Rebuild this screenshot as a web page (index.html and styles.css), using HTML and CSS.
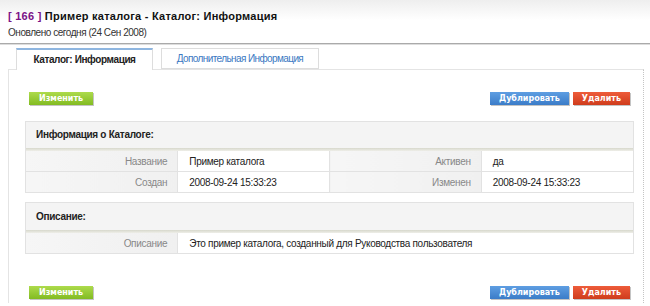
FILE: index.html
```html
<!DOCTYPE html>
<html lang="ru">
<head>
    <meta charset="UTF-8">
    <title>Каталог: Информация</title>
    <link rel="stylesheet" href="styles.css">
</head>
<body>

    <div class="page-header">
        <h1><span class="record-id">[ 166 ]</span> Пример каталога - Каталог: Информация</h1>
        <div class="updated">Оновлено сегодня (24 Сен 2008)</div>
    </div>

    <!-- Tabs -->
    <div class="tabs">
        <a class="tab active">Каталог: Информация</a>
        <a class="tab">Дополнительная Информация</a>
    </div>

    <div class="panel">
        <div class="actions">
            <button class="btn btn-green">Изменить</button>
            <div class="actions-right">
                <button class="btn btn-blue">Дублировать</button>
                <button class="btn btn-red">Удалить</button>
            </div>
        </div>

        <!-- Catalog info -->
        <div class="section">
            <div class="section-title">Информация о Каталоге:</div>
            <table class="fields">
                <tr>
                    <td class="label">Название</td>
                    <td class="value">Пример каталога</td>
                    <td class="label">Активен</td>
                    <td class="value">да</td>
                </tr>
                <tr>
                    <td class="label">Создан</td>
                    <td class="value">2008-09-24 15:33:23</td>
                    <td class="label">Изменен</td>
                    <td class="value">2008-09-24 15:33:23</td>
                </tr>
            </table>
        </div>

        <!-- Description -->
        <div class="section section-desc">
            <div class="section-title">Описание:</div>
            <table class="fields">
                <tr>
                    <td class="label">Описание</td>
                    <td class="value" colspan="3">Это пример каталога, созданный для Руководства пользователя</td>
                </tr>
            </table>
        </div>

        <div class="actions actions-bottom">
            <button class="btn btn-green">Изменить</button>
            <div class="actions-right">
                <button class="btn btn-blue">Дублировать</button>
                <button class="btn btn-red">Удалить</button>
            </div>
        </div>
    </div>

</body>
</html>
```

FILE: styles.css
```css
body {
    margin: 0;
    font-family: "Liberation Sans", Arial, sans-serif;
    font-size: 10px;
    color: #222;
    background-color: #fff;
    overflow: hidden;
}

.page-header {
    background: linear-gradient(to bottom, #eeeeee 0, #ffffff 20px);
    padding: 9px 8px 4px;
    border-bottom: 1px solid #aaaaaa;
    box-shadow: 0 1px 0 #dddddd;
}

h1 {
    margin: 0;
    font-size: 11px;
    line-height: 14px;
    letter-spacing: 0.25px;
    color: #111;
}

.record-id {
    color: #7a1286;
}

.updated {
    margin-top: 3px;
    line-height: 13px;
    color: #333;
    letter-spacing: -0.45px;
}

.tabs {
    display: flex;
    gap: 8px;
    padding: 4px 0 0 16px;
}

.tab {
    display: block;
    height: 19px;
    line-height: 19px;
    text-align: center;
    border: 1px solid #dddddd;
    background-color: #fff;
    color: #3a78c2;
    letter-spacing: -0.6px;
    width: 156px;
}

.tab.active {
    width: 135px;
    height: 20px;
    border-top: 2px solid #8fb6e0;
    border-bottom: none;
    color: #222;
    font-weight: bold;
    letter-spacing: -0.4px;
    position: relative;
    margin-bottom: -1px;
}

.panel {
    margin: 0 6px 0 8px;
    border-top: 1px solid #e4e4e4;
    border-left: 1px solid #e4e4e4;
    border-right: 1px dotted #c4c4c4;
    padding: 22px 9px 4px 16px;
}

.actions {
    display: flex;
    justify-content: space-between;
    padding: 0 4px;
    margin-bottom: 16px;
}

.actions-bottom {
    margin-top: 32px;
    margin-bottom: 0;
}

.actions-right {
    display: flex;
    gap: 4px;
}

.btn {
    height: 13px;
    line-height: 13px;
    padding: 0 9px;
    border: none;
    font-family: "DejaVu Sans", Verdana, sans-serif;
    font-size: 8px;
    font-weight: bold;
    color: #fff;
    box-shadow: 1px 1px 0 #c4c4c4;
    cursor: pointer;
}

.btn-green {
    padding: 0 10px;
    background: linear-gradient(to bottom, #addb4c, #82bb22);
}

.btn-blue {
    background: linear-gradient(to bottom, #5e9ee2, #3b7cc8);
}

.btn-red {
    background: linear-gradient(to bottom, #ee5c3a, #cf3c1c);
}

.section {
    border: 1px solid #e2e2e2;
}

.section-desc {
    margin-top: 9px;
}

.section-title {
    height: 29px;
    line-height: 26px;
    padding-left: 10px;
    font-weight: bold;
    letter-spacing: -0.3px;
    background: linear-gradient(to bottom, #f4f4f4 0, #f4f4f4 26px, #d7d8cc 26px, #eeeee8 29px);
}

.section-desc .section-title {
    height: 30px;
    line-height: 28px;
    background: linear-gradient(to bottom, #f4f4f4 0, #f4f4f4 27px, #d7d8cc 27px, #eeeee8 30px);
}

.fields {
    width: 100%;
    border-collapse: collapse;
    table-layout: fixed;
}

.fields td {
    height: 20px;
    padding: 0;
    border-top: 1px solid #e2e2e2;
    letter-spacing: -0.3px;
}

.fields tr:first-child td {
    border-top: none;
}

.fields .label {
    background: linear-gradient(to right, #f6f6f6, #f0f0f0);
    color: #888;
    text-align: right;
    padding-right: 10px;
    border-right: 1px solid #e2e2e2;
}

.fields .value {
    padding-left: 11px;
    color: #222;
    border-right: 1px solid #e2e2e2;
}

.fields td:last-child {
    border-right: none;
}
```
